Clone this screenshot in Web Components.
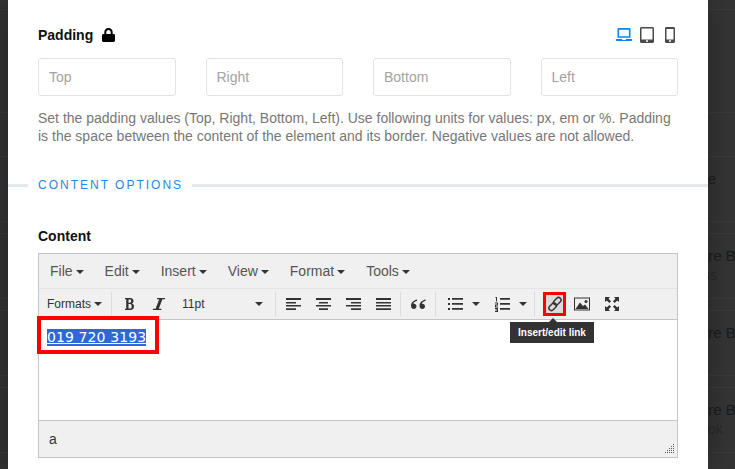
<!DOCTYPE html>
<html><head><meta charset="utf-8"><title>Padding</title>
<style>
html,body{margin:0;padding:0;height:469px;overflow:hidden;background:#343434;font-family:"Liberation Sans",Arial,sans-serif}
</style></head><body>
<x-backdrop>
  <x-back-row style="--h:103px;--m:0px;--bb:0px"></x-back-row>
  <x-back-row style="--h:44px;--m:0px;--bb:0px"></x-back-row>
  <x-back-row style="--pl:708px">e</x-back-row>
  <x-back-row sub="ss" subx="3">ure B</x-back-row>
  <x-back-row>ure B</x-back-row>
  <x-back-row sub="ok" subx="8">ure B</x-back-row>
</x-backdrop>
<x-modal>
  <x-padding-group></x-padding-group>
  <x-divider>CONTENT OPTIONS</x-divider>
  <x-label class="content">Content</x-label>
  <x-editor></x-editor>
</x-modal>
<script>
function def(name, css, html){
  customElements.define(name, class extends HTMLElement{
    constructor(){super();const r=this.attachShadow({mode:'open'});
      r.innerHTML='<style>'+css+'</style>'+(typeof html==='function'?html(this):html);}
  });
}
const ICONS={
 lock:'<svg width="13" height="14" viewBox="0 0 13 14"><path fill="#000" d="M2.300 6V4.200C2.300 1.800 4.100 0 6.500 0s4.200 1.800 4.200 4.200V6h.9c.8 0 1.400.6 1.400 1.400v5.200c0 .8-.6 1.400-1.400 1.400H1.400C.6 14 0 13.400 0 12.600V7.400C0 6.600.6 6 1.400 6zm2-.1h4.400V4.200c0-1.200-1-2.200-2.200-2.200s-2.200 1-2.200 2.200z"/></svg>',
 laptop:'<svg width="16" height="14" viewBox="0 0 16 14"><path fill="#0a84ff" fill-rule="evenodd" d="M2.500 0h11a1 1 0 0 1 1 1v8.800h-13V1a1 1 0 0 1 1-1zm.6 1.700v6.500h9.800V1.700zM0 11h6l.5 1h3l.5-1h6v1c0 .6-.4 1-1 1H1c-.6 0-1-.4-1-1z"/></svg>',
 tablet:'<svg width="14" height="16" viewBox="0 0 14 16"><path fill-rule="evenodd" fill="#4a4a4a" d="M1.500 0h11C13.400 0 14 .6 14 1.500v13c0 .9-.6 1.500-1.500 1.500h-11C.6 16 0 15.400 0 14.500v-13C0 .6.600 0 1.500 0zM1.500 1.500v11h11v-11zM6 13.300v1.400h2v-1.400z"/></svg>',
 mobile:'<svg width="10" height="16" viewBox="0 0 10 16"><path fill-rule="evenodd" fill="#4a4a4a" d="M1.500 0h7C9.400 0 10 .6 10 1.500v13c0 .9-.6 1.500-1.500 1.500h-7C.6 16 0 15.400 0 14.500v-13C0 .6.600 0 1.500 0zM1.500 2v10.500h7V2zM4 13.300v1.500h2v-1.500z"/></svg>',
 bold:'<svg width="16" height="16" viewBox="0 0 16 16"><path fill="#333" fill-rule="evenodd" d="M4 2h5c2.200 0 3.500 1 3.500 2.900 0 1.200-.6 2.100-1.700 2.600 1.400.4 2.200 1.400 2.200 2.900 0 2.200-1.500 3.600-4 3.600H4v-1.300h1.200V3.300H4zm3.500 1.400v3.400h1.200c1 0 1.500-.6 1.500-1.700 0-1.100-.5-1.700-1.500-1.700zm0 4.700v4.500h1.500c1.100 0 1.700-.8 1.700-2.200 0-1.500-.6-2.300-1.800-2.300z"/></svg>',
 italic:'<svg width="16" height="16" viewBox="0 0 16 16"><path fill="#333" d="M6 2h8v1.300h-2.600L7.800 12.700h2.600V14H1.900v-1.300h2.700L8.200 3.300H6z"/></svg>',
 al:'<svg width="16" height="16" viewBox="0 0 16 16"><path fill="#333" d="M1 2h15v2H1zM1 6h10v1.500H1zM1 9h15v1.500H1zM1 12.300h10v1.700H1z"/></svg>',
 ac:'<svg width="16" height="16" viewBox="0 0 16 16"><path fill="#333" d="M1 2h15v2H1zM4 6h9v1.500H4zM1 9h15v1.500H1zM4 12.300h9v1.700H4z"/></svg>',
 ar:'<svg width="16" height="16" viewBox="0 0 16 16"><path fill="#333" d="M1 2h15v2H1zM6 6h10v1.500H6zM1 9h15v1.500H1zM6 12.300h10v1.700H6z"/></svg>',
 aj:'<svg width="16" height="16" viewBox="0 0 16 16"><path fill="#333" d="M1 2h15v2H1zM1 6h15v1.500H1zM1 9h15v1.500H1zM1 12.300h15v1.700H1z"/></svg>',
 quote:'<svg width="16" height="16" viewBox="0 0 16 16"><path fill="#333" d="M7 3.500C4 4.300 1 6.300 1 9.700 1 11.500 2 13 3.700 13s2.800-1.200 2.800-2.700c0-1.500-1-2.600-2.400-2.600-.3 0-.6 0-.8.100C3.600 6.300 5.100 5.300 7 5zM15.500 3.500c-3 .8-6 2.800-6 6.200 0 1.800 1 3.300 2.700 3.300s2.800-1.200 2.800-2.700c0-1.500-1-2.600-2.400-2.600-.3 0-.6 0-.8.100.3-1.500 1.800-2.500 3.700-2.800z"/></svg>',
 ul:'<svg width="16" height="16" viewBox="0 0 16 16"><path fill="#333" d="M1 2h2v2H1zM5 2h11v1.700H5zM1 7h2v2H1zM5 7h11v1.700H5zM1 12h2v2H1zM5 12h11v1.700H5z"/></svg>',
 ol:'<svg width="16" height="16" viewBox="0 0 16 16"><path fill="#333" d="M6 2h10v1.700H6zM6 7h10v1.700H6zM6 12h10v1.700H6zM1.500 1H3v4.500H2V2H1.500zM1 6.500h3v3H2v1h2v1H1v-3h2v-1H1zM1 12h3v4H1v-1h2v-.6H1.500v-.8H3V13H1z"/></svg>',
 link:'<svg width="16" height="16" viewBox="0 0 16 16"><g fill="none" stroke="#333" stroke-width="1.500"><rect x="7.800" y="1" width="5" height="8.500" rx="2.500" transform="rotate(45 10.300 5.250)"/><rect x="3.200" y="6.500" width="5" height="8.500" rx="2.500" transform="rotate(45 5.700 10.750)"/></g></svg>',
 image:'<svg width="16" height="16" viewBox="0 0 16 16"><path fill="#333" fill-rule="evenodd" d="M0 1.500h16v13H0zM1 2.500v11h14v-11z"/><path fill="#333" d="M1.500 13l4.500-6.500 3 3.500 2-1.500 3.500 4.500z"/><circle cx="12" cy="5.500" r="1.500" fill="#333"/></svg>',
 full:'<svg width="16" height="16" viewBox="0 0 16 16"><path fill="#333" d="M1 1h5L4.500 2.800 7 5.300 5.300 7 2.800 4.500 1 6zM15 1v5l-1.800-1.500L10.700 7 9 5.300l2.500-2.500L10 1zM1 15v-5l1.800 1.500L5.300 9 7 10.700l-2.500 2.500L6 15zM15 15h-5l1.500-1.800L9 10.700 10.700 9l2.500 2.500L15 10z"/></svg>'
};
def('x-backdrop',':host{display:block;padding-top:9px;color:#1b1b1b;font-size:15px}','<slot></slot>');
def('x-back-row',`:host{display:block;box-sizing:border-box;height:var(--h,66px);margin-bottom:var(--m,11px);border-top:1px solid #3a3a3a;border-bottom:var(--bb,1px) solid #3a3a3a;padding:13px 0 0 var(--pl,700px);white-space:nowrap;line-height:18px}
 .s{display:block;font-size:14px;color:#282828;line-height:20px}`,
 el=>'<slot></slot>'+(el.getAttribute('sub')?'<span class="s" style="margin-left:'+el.getAttribute('subx')+'px">'+el.getAttribute('sub')+'</span>':''));
def('x-modal',`:host{position:absolute;left:8px;top:0;width:700px;height:469px;box-sizing:border-box;background:#fff;overflow:hidden;padding:0 30px;display:block;box-shadow:0 0 24px rgba(0,0,0,.3)}`,'<slot></slot>');
def('x-label',`:host{display:block;font:bold 14px/18px "Liberation Sans",Arial,sans-serif;color:#111}`,'<slot></slot>');
def('x-padding-group',`:host{display:block;padding-top:25px}
 .head{display:flex;align-items:center;height:20px}
 .lock{margin-left:9px;display:flex;margin-top:-1px}
 .dev{margin-left:auto;display:flex;align-items:center;padding-right:3px}
 .dev span{display:flex}
 .row{display:grid;grid-template-columns:repeat(4,1fr);gap:30px;margin-top:13px}
 p{margin:13px 0 0;font:14px/18px "Liberation Sans",Arial,sans-serif;color:#777}`,
 `<div class="head"><x-label>Padding</x-label><span class="lock">${ICONS.lock}</span>
   <div class="dev"><span>${ICONS.laptop}</span><span style="margin-left:8px">${ICONS.tablet}</span><span style="margin-left:11px">${ICONS.mobile}</span></div></div>
  <div class="row"><x-pad-input>Top</x-pad-input><x-pad-input>Right</x-pad-input><x-pad-input>Bottom</x-pad-input><x-pad-input>Left</x-pad-input></div>
  <p>Set the padding values (Top, Right, Bottom, Left). Use following units for values: px, em or %. Padding is the space between the content of the element and its border. Negative values are not allowed.</p>`);
def('x-pad-input',`:host{display:block;box-sizing:border-box;height:38px;border:1px solid #e3e3e3;border-radius:3px;padding:0 10px;font:14px/36px "Liberation Sans",Arial,sans-serif;color:#a3a3a3}`,'<slot></slot>');
def('x-divider',`:host{display:flex;align-items:center;margin:31px -30px 0;height:18px;font:12px/18px "Liberation Sans",Arial,sans-serif;letter-spacing:2px;color:#1f87e5}
 i{height:3px;background:#e5e8eb;display:block}
 i.a{width:20px;margin-right:10px}i.b{flex:1;margin-left:9px}`,'<i class="a"></i><slot></slot><i class="b"></i>');
def('x-editor',`:host{display:block;box-sizing:border-box;height:205px;margin-top:8px;border:1px solid #c5c5c5;background:#fff;position:relative}
 .menu{display:flex;align-items:center;height:34px;background:#f0f0f0;border-bottom:1px solid #e3e3e3;padding-left:11px;gap:21px;font-size:14px;color:#555}
 .tb{display:flex;align-items:center;height:30px;background:#f0f0f0;border-bottom:1px solid #c5c5c5;padding-left:8px;font-size:12px;color:#333}
 .body{height:100px;padding:8px 0 0 8px;box-sizing:border-box;position:relative}
 .status{height:36px;background:#f0f0f0;border-top:1px solid #c5c5c5;padding-left:10px;font-size:14px;line-height:36px;color:#333;position:relative}
 .grip{position:absolute;right:2px;bottom:2px;display:block}
 .sel{font:14px/17px "DejaVu Sans",Verdana,sans-serif;letter-spacing:.1px;background:#3067d6;color:#fff;text-decoration:underline;display:inline-block;height:17px}
 .ring{position:absolute;left:-2px;top:-4px;width:114px;height:30px;border:4px solid #f00;pointer-events:none}
 .sep{width:1px;height:24px;background:#dcdcdc;flex:none}
 .fmt{width:55px;display:flex;align-items:center;justify-content:space-between;flex:none}
 .size{width:81px;display:flex;align-items:center;justify-content:space-between;flex:none}
 .c{display:inline-block;width:0;height:0;border:4px solid transparent;border-top-color:#333;border-bottom:0;flex:none}
 x-tool{flex:none}
 .tip{position:absolute;left:471px;top:68px}`,
 `<div class="menu"><x-menu-item>File</x-menu-item><x-menu-item>Edit</x-menu-item><x-menu-item>Insert</x-menu-item><x-menu-item>View</x-menu-item><x-menu-item>Format</x-menu-item><x-menu-item>Tools</x-menu-item></div>
  <div class="tb">
   <span class="fmt">Formats<i class="c"></i></span><span class="sep" style="margin:0 2px 0 9px"></span>
   <x-tool icon="bold"></x-tool><x-tool icon="italic"></x-tool>
   <span class="size" style="margin:0 12px 0 8px">11pt<i class="c"></i></span><span class="sep"></span>
   <x-tool icon="al" style="margin-left:2px"></x-tool><x-tool icon="ac"></x-tool><x-tool icon="ar"></x-tool><x-tool icon="aj"></x-tool>
   <span class="sep" style="margin-left:2px"></span><x-tool icon="quote" style="margin-left:2px"></x-tool><span class="sep" style="margin-left:2px"></span>
   <x-tool icon="ul" style="margin-left:4px"></x-tool><i class="c" style="margin:0 7px 0 2px"></i><x-tool icon="ol"></x-tool><i class="c" style="margin:0 7px 0 2px"></i><span class="sep"></span>
   <x-tool icon="link" active style="margin-left:8px"></x-tool><x-tool icon="image" style="margin-left:1px"></x-tool><x-tool icon="full"></x-tool>
  </div>
  <div class="body"><span class="sel">019 720 3193</span><span class="ring"></span></div>
  <div class="status">a<svg class="grip" width="12" height="12" viewBox="0 0 12 12"><path fill="#555" d="M10 1h1v1h-1zM10 3h1v1h-1zM8 3h1v1H8zM10 5h1v1h-1zM8 5h1v1H8zM6 5h1v1H6zM10 7h1v1h-1zM8 7h1v1H8zM6 7h1v1H6zM4 7h1v1H4zM10 9h1v1h-1zM8 9h1v1H8zM6 9h1v1H6zM4 9h1v1H4zM2 9h1v1H2z"/></svg></div>
  <x-tooltip class="tip">Insert/edit link</x-tooltip>`);
def('x-menu-item',`:host{display:inline-flex;align-items:center;gap:3px}
 i{display:inline-block;width:0;height:0;border:4px solid transparent;border-top-color:#333;border-bottom:0;margin-top:1px}`,'<slot></slot><i></i>');
def('x-tool',`:host{display:flex;align-items:center;justify-content:center;width:30px;height:24px;box-sizing:border-box;position:relative}
 :host([active]){width:23px;background:#dcdcdc;outline:3px solid #f00;outline-offset:-3px}`,
 el=>ICONS[el.getAttribute('icon')]);
def('x-tooltip',`:host{display:block;width:84px;height:21px;background:#333;color:#fff;font:bold 10px/21px "Liberation Sans",Arial,sans-serif;text-align:center;white-space:nowrap}
 i{position:absolute;left:39px;top:-4px;border:4px solid transparent;border-bottom-color:#333;border-top:0}`,'<i></i><slot></slot>');
</script>
<style>x-label.content{margin-top:33px}</style>
</body></html>
